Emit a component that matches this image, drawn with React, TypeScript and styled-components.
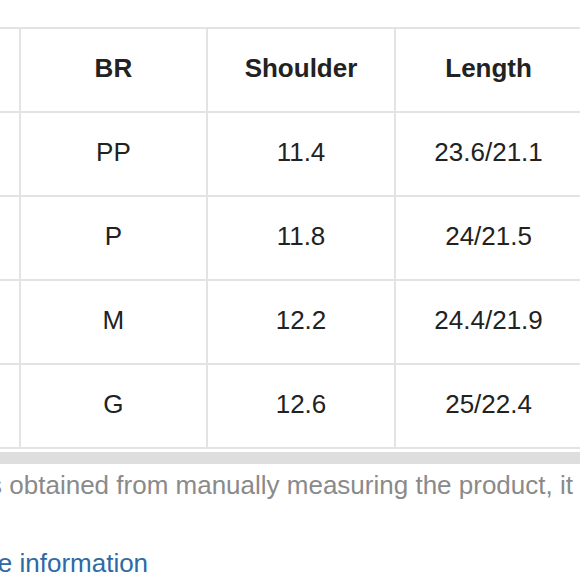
import styled, { createGlobalStyle } from "styled-components";

const Global = createGlobalStyle`
  body {
    margin: 0;
    background: #fff;
    font-family: "Liberation Sans", Arial, sans-serif;
  }
`;

const Page = styled.div`
  width: 580px;
  height: 580px;
  overflow: hidden;
  background: #fff;
`;

// the screenshot is a crop of a wider page, so the sheet starts left of the view
const Sheet = styled.div`
  margin-left: -169px;
  padding-top: 27px;
`;

const TableScroll = styled.div`
  width: 1000px;
`;

const Table = styled.table`
  border-collapse: collapse;
  table-layout: fixed;
  width: 940px;
`;

const Cell = styled.td<{ $head?: boolean }>`
  width: 185.5px;
  height: 78px;
  padding: 0 0 4px;
  border: 2px solid #e3e3e3;
  text-align: center;
  vertical-align: middle;
  font-size: 26px;
  font-weight: ${(p) => (p.$head ? 700 : 400)};
  color: #222;
`;

const Scrollbar = styled.div`
  height: 12px;
  margin-top: 3px;
  background: #dedede;
`;

const Note = styled.p`
  margin: 2px 0 0 -11px;
  font-size: 26px;
  line-height: 39px;
  color: #8a8a8a;
  white-space: nowrap;
`;

const MoreLink = styled.a`
  display: block;
  margin: 39px 0 0 122px;
  font-size: 26px;
  line-height: 39px;
  color: #2d6aa6;
  text-decoration: none;
  white-space: nowrap;
`;

const header = ["US", "BR", "Shoulder", "Length", "Sleeve"];
const rows = [
  ["XS", "PP", "11.4", "23.6/21.1", "22.4"],
  ["S", "P", "11.8", "24/21.5", "22.8"],
  ["M", "M", "12.2", "24.4/21.9", "23.2"],
  ["L", "G", "12.6", "25/22.4", "23.6"],
];

export default function App() {
  return (
    <Page>
      <Global />
      <Sheet>
        <TableScroll>
          <Table>
            <thead>
              <tr>
                {header.map((h) => (
                  <Cell as="th" $head key={h}>
                    {h}
                  </Cell>
                ))}
              </tr>
            </thead>
            <tbody>
              {rows.map((r) => (
                <tr key={r[0]}>
                  {r.map((v, i) => (
                    <Cell key={i}>{v}</Cell>
                  ))}
                </tr>
              ))}
            </tbody>
          </Table>
          <Scrollbar />
        </TableScroll>
        <Note>
          The size data is obtained from manually measuring the product, it may deviate by 1-3 cm.
        </Note>
        <MoreLink href="#">More information</MoreLink>
      </Sheet>
    </Page>
  );
}
